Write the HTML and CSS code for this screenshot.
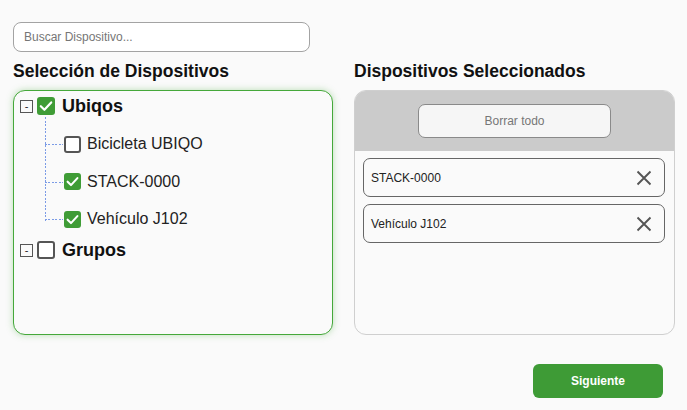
FILE: index.html
```html
<!DOCTYPE html>
<html lang="es">
<head>
<meta charset="utf-8">
<title>Dispositivos</title>
<link rel="stylesheet" href="styles.css">
</head>
<body>
<div class="page">
  <input class="search" type="text" placeholder="Buscar Dispositivo...">
  <div class="columns">
    <section class="col">
      <h2 class="title">Selección de Dispositivos</h2>
      <div class="tree-box">
        <div class="node">
          <div class="row parent">
            <span class="toggle">-</span>
            <span class="check on"><svg viewBox="0 0 18 18" width="18" height="18"><polyline points="3.8,9.2 7.4,12.8 14.2,5.4" fill="none" stroke="#fff" stroke-width="2.2" stroke-linecap="round" stroke-linejoin="round"/></svg></span>
            <span class="label-parent">Ubiqos</span>
          </div>
          <ul class="children">
            <li class="row child"><span class="check small"></span><span class="label-child">Bicicleta UBIQO</span></li>
            <li class="row child"><span class="check small on"><svg viewBox="0 0 18 18" width="17" height="17"><polyline points="3.8,9.2 7.4,12.8 14.2,5.4" fill="none" stroke="#fff" stroke-width="2.2" stroke-linecap="round" stroke-linejoin="round"/></svg></span><span class="label-child">STACK-0000</span></li>
            <li class="row child"><span class="check small on"><svg viewBox="0 0 18 18" width="17" height="17"><polyline points="3.8,9.2 7.4,12.8 14.2,5.4" fill="none" stroke="#fff" stroke-width="2.2" stroke-linecap="round" stroke-linejoin="round"/></svg></span><span class="label-child">Vehículo J102</span></li>
          </ul>
        </div>
        <div class="node">
          <div class="row parent groups">
            <span class="toggle">-</span>
            <span class="check"></span>
            <span class="label-parent">Grupos</span>
          </div>
        </div>
      </div>
    </section>
    <section class="col">
      <h2 class="title">Dispositivos Seleccionados</h2>
      <div class="sel-panel">
        <div class="sel-head">
          <button class="clear-btn" type="button">Borrar todo</button>
        </div>
        <div class="sel-list">
          <div class="sel-item"><span>STACK-0000</span><svg class="x" viewBox="0 0 16 16" width="16" height="16"><path d="M1.5 1.5 L14.5 14.5 M14.5 1.5 L1.5 14.5" stroke="#555" stroke-width="1.9" fill="none"/></svg></div>
          <div class="sel-item"><span>Vehículo J102</span><svg class="x" viewBox="0 0 16 16" width="16" height="16"><path d="M1.5 1.5 L14.5 14.5 M14.5 1.5 L1.5 14.5" stroke="#555" stroke-width="1.9" fill="none"/></svg></div>
        </div>
      </div>
    </section>
  </div>
  <div class="actions">
    <button class="next-btn" type="button">Siguiente</button>
  </div>
</div>
</body>
</html>
```

FILE: styles.css
```css
html, body {
  margin: 0;
  padding: 0;
  background: #fafafa;
  font-family: "Liberation Sans", Arial, sans-serif;
  color: #222;
}

.page {
  padding: 22px 12px 0 13px;
}

.search {
  display: block;
  box-sizing: border-box;
  width: 297px;
  height: 30px;
  margin: 0;
  padding: 0 10px;
  border: 1px solid #a3a3a3;
  border-radius: 8px;
  background: #fff;
  font-family: "Liberation Sans", Arial, sans-serif;
  font-size: 12px;
  color: #222;
  outline: none;
}
.search::placeholder {
  color: #767676;
}

.columns {
  display: grid;
  grid-template-columns: 320px 321px;
  column-gap: 21px;
  margin-top: 9px;
}

.title {
  margin: 0 0 9px 0;
  font-size: 17.5px;
  line-height: 20px;
  font-weight: bold;
  color: #111;
}

.tree-box {
  box-sizing: border-box;
  height: 245px;
  border: 1px solid #45a83a;
  border-radius: 12px;
  background: #fafafa;
  box-shadow: 0 0 7px rgba(69, 168, 58, 0.35);
  padding: 5px 0 0 6px;
}

.row {
  display: flex;
  align-items: center;
}

.parent {
  height: 20px;
}

.toggle {
  box-sizing: border-box;
  width: 13px;
  height: 13px;
  border: 1px solid #555;
  display: flex;
  align-items: center;
  justify-content: center;
  font-size: 11px;
  line-height: 1;
  color: #222;
  margin-right: 4px;
}

.check {
  box-sizing: border-box;
  width: 18px;
  height: 18px;
  border: 2px solid #555;
  border-radius: 3px;
  background: #fff;
  display: flex;
  align-items: center;
  justify-content: center;
  flex: none;
}
.check.on {
  border: none;
  background: #3f9c36;
}
.check.small {
  width: 17px;
  height: 17px;
}
.check svg {
  display: block;
}

.label-parent {
  margin-left: 7px;
  font-size: 18px;
  font-weight: bold;
  color: #111;
}

.children {
  list-style: none;
  margin: 0 0 0 25px;
  padding: 9.5px 0 0 0;
  position: relative;
}
.children::before {
  content: "";
  position: absolute;
  left: 0;
  top: 1px;
  bottom: 17px;
  width: 1px;
  background: repeating-linear-gradient(to bottom, #7b9be6 0 2px, transparent 2px 3.5px);
}

.child {
  height: 37.5px;
  padding-left: 19px;
  position: relative;
}
.child::before {
  content: "";
  position: absolute;
  left: 0;
  top: 50%;
  width: 18px;
  height: 1px;
  background: repeating-linear-gradient(to right, #7b9be6 0 2px, transparent 2px 3.5px);
}

.label-child {
  margin-left: 6px;
  font-size: 16px;
  color: #222;
}

.groups {
  margin-top: 2px;
}

.sel-panel {
  box-sizing: border-box;
  height: 245px;
  border: 1px solid #cfcfcf;
  border-radius: 12px;
  background: #fafafa;
  overflow: hidden;
}

.sel-head {
  background: #cbcbcb;
  height: 60px;
  box-sizing: border-box;
  padding-top: 13px;
  display: flex;
  justify-content: center;
}

.clear-btn {
  box-sizing: border-box;
  width: 193px;
  height: 34px;
  border: 1px solid #8a8a8a;
  border-radius: 7px;
  background: #f6f6f6;
  font-family: "Liberation Sans", Arial, sans-serif;
  font-size: 12px;
  color: #777;
  padding: 0;
}

.sel-list {
  display: flex;
  flex-direction: column;
  gap: 7px;
  padding: 7px 9px 0 8px;
}

.sel-item {
  box-sizing: border-box;
  height: 39px;
  border: 1px solid #666;
  border-radius: 7px;
  background: #fafafa;
  display: flex;
  align-items: center;
  justify-content: space-between;
  padding: 0 12px 0 7px;
  font-size: 12px;
  color: #222;
}
.sel-item .x {
  display: block;
}

.actions {
  display: flex;
  justify-content: flex-end;
  margin-top: 29px;
  padding-right: 12px;
}

.next-btn {
  width: 130px;
  height: 34px;
  border: none;
  border-radius: 6px;
  background: #3e9b36;
  color: #fff;
  font-family: "Liberation Sans", Arial, sans-serif;
  font-size: 12px;
  font-weight: bold;
  padding: 0;
}
```
